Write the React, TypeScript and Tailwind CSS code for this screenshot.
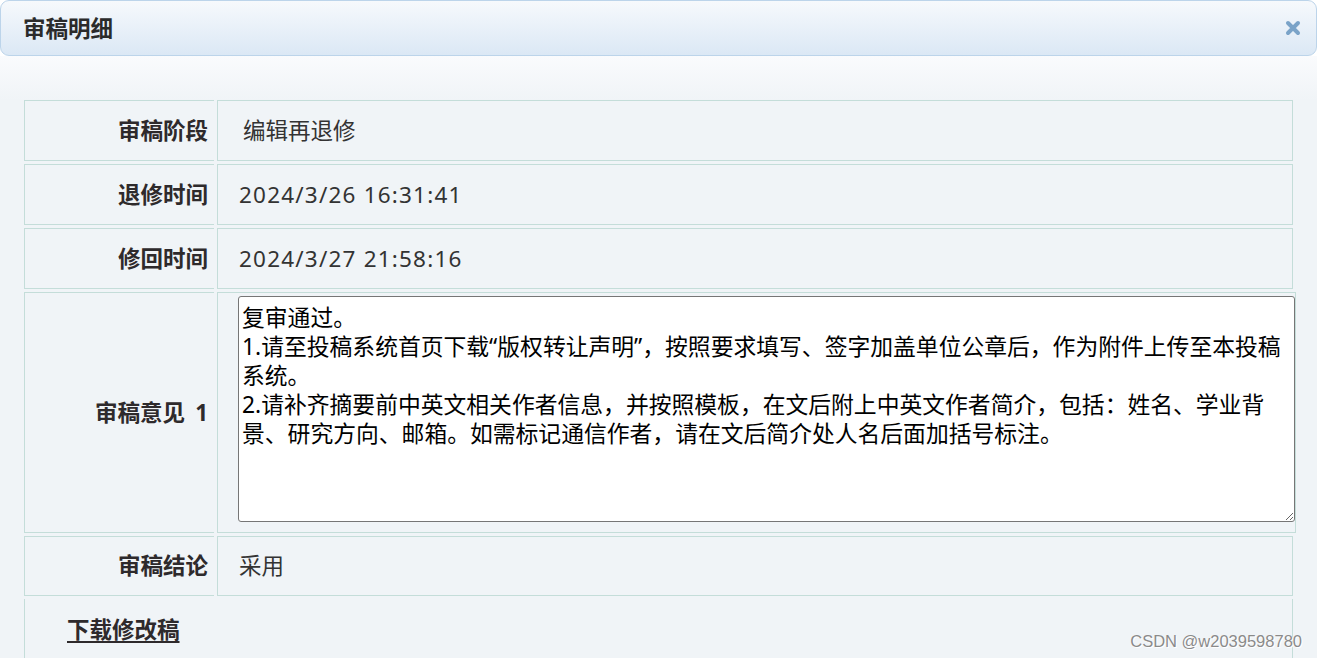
import React from 'react';

const font = 'font-["Noto_Sans","Noto_Sans_CJK_SC",sans-serif]';

const opinion =
  '复审通过。\n1.请至投稿系统首页下载“版权转让声明”，按照要求填写、签字加盖单位公章后，作为附件上传至本投稿\n系统。\n2.请补齐摘要前中英文相关作者信息，并按照模板，在文后附上中英文作者简介，包括：姓名、学业背\n景、研究方向、邮箱。如需标记通信作者，请在文后简介处人名后面加括号标注。';

function Label({ children, height }: { children: React.ReactNode; height: string }) {
  return (
    <div
      className={`${height} w-[190px] shrink-0 border-l border-t border-b border-[#c4ddd9] flex items-center justify-end pr-[6px] font-bold text-[#2e2a2c]`}
    >
      {children}
    </div>
  );
}

function Row({ label, value, extra = '' }: { label: string; value: string; extra?: string }) {
  return (
    <div className="flex gap-[3px]">
      <Label height="h-[61px]">{label}</Label>
      <div className="h-[61px] flex-1 border border-[#c4ddd9] flex items-center pl-[21px] text-[#333]">
        <span className={extra}>{value}</span>
      </div>
    </div>
  );
}

function CloseIcon() {
  return (
    <svg width="16" height="16" viewBox="0 0 16 16" className="block">
      <path
        d="M3 3 L13 13 M13 3 L3 13"
        stroke="#7aa3c8"
        strokeWidth="4"
        strokeLinecap="round"
        fill="none"
      />
    </svg>
  );
}

export default function App() {
  return (
    <div className={`relative h-[658px] w-full overflow-hidden bg-[#f0f4f7] ${font} text-[22.5px]`}>
      {/* header */}
      <div className="h-[56px] bg-white">
        <div className="h-[56px] rounded-[9px] border border-[#bcd4ea] bg-gradient-to-b from-[#f6f9fc] to-[#dbe8f5] flex items-center justify-between pl-[22px] pr-[15px]">
          <h1 className="text-[22.5px] font-bold text-[#2b2b2b] leading-none mt-[2px]">审稿明细</h1>
          <CloseIcon />
        </div>
      </div>

      {/* body */}
      <div className="bg-gradient-to-b from-[#fafbfd] to-[#f0f4f7] h-[44px]" />
      <div className="px-6 flex flex-col gap-[3px] leading-[28px]">
        <Row label="审稿阶段" value="编辑再退修" extra="ml-[4px]" />
        <Row label="退修时间" value="2024/3/26 16:31:41" extra="tracking-[1.2px]" />
        <Row label="修回时间" value="2024/3/27 21:58:16" extra="tracking-[1.2px]" />

        <div className="flex gap-[3px]">
          <Label height="h-[241px]">
            审稿意见<span className="ml-[10px]">1</span>
          </Label>
          <div className="h-[241px] flex-1 border border-[#c4ddd9] pl-[20px] pt-[3px]">
            <textarea
              readOnly
              defaultValue={opinion}
              className="block w-[1057px] h-[226px] rounded-[3px] border border-[#767676] bg-white pl-[3px] pr-[3px] pt-[6px] text-[22.8px] leading-[29px] text-black outline-none"
            />
          </div>
        </div>

        <div className="flex gap-[3px]">
          <Label height="h-[60px]">审稿结论</Label>
          <div className="h-[60px] flex-1 border border-[#c4ddd9] flex items-center pl-[21px] text-[#333]">
            采用
          </div>
        </div>

        <div className="h-[80px] border-l border-r border-[#c4ddd9] pl-[42px] pt-[17px]">
          <a href="#" className="font-bold text-[#2e2a2c] underline underline-offset-[3px]">
            下载修改稿
          </a>
        </div>
      </div>

      {/* watermark */}
      <div className='absolute right-[15px] bottom-[9px] font-["Liberation_Sans",sans-serif] text-[16.5px] leading-none text-[#8a8a8a] [text-shadow:0_0_1px_#fff,1px_1px_0_#fff]'>
        CSDN @w2039598780
      </div>
    </div>
  );
}
